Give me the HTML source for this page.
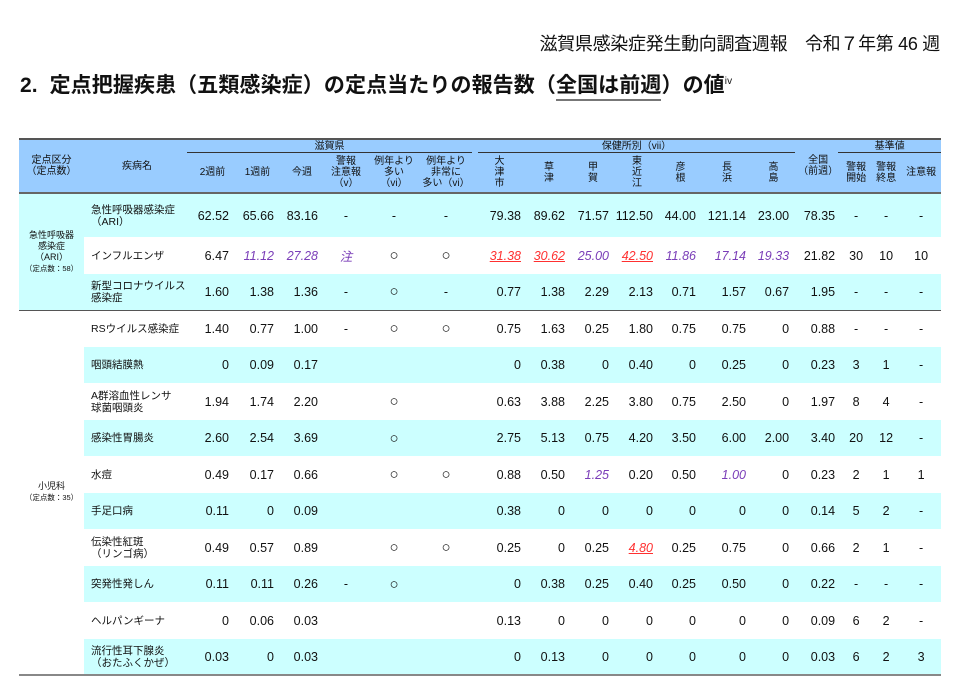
<!DOCTYPE html>
<html><head><meta charset="utf-8"><style>
body{margin:0;width:954px;height:684px;background:#fff;position:relative;overflow:hidden;font-family:"Liberation Sans","Noto Sans CJK JP",sans-serif;color:#111}
.hdr{position:absolute;right:14px;top:30px;font-size:18px;letter-spacing:-0.3px;white-space:nowrap}
.ttl{position:absolute;left:20px;top:69px;font-size:21px;font-weight:bold;letter-spacing:0.1px;white-space:nowrap}
.u{border-bottom:2px solid #777;padding-bottom:2px}
table{position:absolute;left:19px;top:138px;border-collapse:collapse;table-layout:fixed;width:922px}
td{padding:0;font-size:12.5px;white-space:nowrap}
thead td{background:#99ccff;font-size:10px;text-align:center;line-height:11px;vertical-align:middle}
tbody td{text-align:right;padding-right:6px}
tbody td.n{text-align:left;padding-left:7px;font-size:10.5px;line-height:12px}
tbody td.c{text-align:center;padding-right:0}
td.c.o{font-size:15px}
tbody td.g{background:#fff;text-align:center;padding:0;font-size:9px;line-height:11px}
tr.b td{background:#ccffff}
tr.w td{background:#fff}
.p{color:#7a3db8;font-style:italic}
.r{color:#ff3030;font-style:italic;text-decoration:underline}
</style></head><body>
<div class="hdr">滋賀県感染症発生動向調査週報　令和７年第 46 週</div>
<div class="ttl">2.&nbsp; 定点把握疾患（五類感染症）の定点当たりの報告数（<span class="u">全国は前週</span>）の値<sup style="font-size:10px;font-weight:normal">iv</sup></div>
<table>
<colgroup><col style="width:65px"><col style="width:106px"><col style="width:45px"><col style="width:45px"><col style="width:44px"><col style="width:44px"><col style="width:52px"><col style="width:52px"><col style="width:55px"><col style="width:44px"><col style="width:44px"><col style="width:44px"><col style="width:43px"><col style="width:50px"><col style="width:43px"><col style="width:46px"><col style="width:30px"><col style="width:30px"><col style="width:40px"></colgroup>
<thead>
<tr style="height:14px"><td rowspan="2" style="border-top:2px solid #555">定点区分<br>（定点数）</td><td rowspan="2" style="border-top:2px solid #555">疾病名</td><td colspan="6" style="border-top:2px solid #555"><span style="display:block;border-bottom:1px solid #333;margin:0 0 0 -3px">滋賀県</span></td><td colspan="7" style="border-top:2px solid #555"><span style="display:block;border-bottom:1px solid #333;margin:0 0 0 6px">保健所別（vii）</span></td><td rowspan="2" style="border-top:2px solid #555">全国<br>（前週）</td><td colspan="3" style="border-top:2px solid #555"><span style="display:block;border-bottom:1px solid #333;margin-left:-3px">基準値</span></td></tr>
<tr style="height:40px"><td>2週前</td><td>1週前</td><td>今週</td><td>警報<br>注意報<br>（v）</td><td>例年より<br>多い<br>（vi）</td><td>例年より<br>非常に<br>多い（vi）</td><td>大<br>津<br>市</td><td>草<br>津</td><td>甲<br>賀</td><td>東<br>近<br>江</td><td>彦<br>根</td><td>長<br>浜</td><td>高<br>島</td><td>警報<br>開始</td><td>警報<br>終息</td><td>注意報</td></tr>
</thead>
<tbody>
<tr class="b" style="height:44px"><td class="g" rowspan="3" style="border-top:2px solid #666">急性呼吸器<br>感染症<br>（ARI）<br><span style="font-size:7.5px">（定点数：58）</span></td><td class="n" style="border-top:2px solid #666">急性呼吸器感染症<br>（ARI）</td><td style="border-top:2px solid #666">62.52</td><td style="border-top:2px solid #666">65.66</td><td style="border-top:2px solid #666">83.16</td><td class="c" style="border-top:2px solid #666">-</td><td class="c" style="border-top:2px solid #666">-</td><td class="c" style="border-top:2px solid #666">-</td><td style="border-top:2px solid #666">79.38</td><td style="border-top:2px solid #666">89.62</td><td style="border-top:2px solid #666">71.57</td><td style="border-top:2px solid #666">112.50</td><td style="border-top:2px solid #666">44.00</td><td style="border-top:2px solid #666">121.14</td><td style="border-top:2px solid #666">23.00</td><td style="border-top:2px solid #666">78.35</td><td class="c" style="border-top:2px solid #666">-</td><td class="c" style="border-top:2px solid #666">-</td><td class="c" style="border-top:2px solid #666">-</td></tr>
<tr class="w" style="height:37px"><td class="n">インフルエンザ</td><td>6.47</td><td class="p">11.12</td><td class="p">27.28</td><td class="c p">注</td><td class="c o">○</td><td class="c o">○</td><td class="r">31.38</td><td class="r">30.62</td><td class="p">25.00</td><td class="r">42.50</td><td class="p">11.86</td><td class="p">17.14</td><td class="p">19.33</td><td>21.82</td><td class="c">30</td><td class="c">10</td><td class="c">10</td></tr>
<tr class="b" style="height:36px"><td class="n">新型コロナウイルス<br>感染症</td><td>1.60</td><td>1.38</td><td>1.36</td><td class="c">-</td><td class="c o">○</td><td class="c">-</td><td>0.77</td><td>1.38</td><td>2.29</td><td>2.13</td><td>0.71</td><td>1.57</td><td>0.67</td><td>1.95</td><td class="c">-</td><td class="c">-</td><td class="c">-</td></tr>
<tr class="w" style="height:37px;border-top:1.5px solid #555"><td class="g" rowspan="10">小児科<br><span style="font-size:7.5px">（定点数：35）</span></td><td class="n">RSウイルス感染症</td><td>1.40</td><td>0.77</td><td>1.00</td><td class="c">-</td><td class="c o">○</td><td class="c o">○</td><td>0.75</td><td>1.63</td><td>0.25</td><td>1.80</td><td>0.75</td><td>0.75</td><td>0</td><td>0.88</td><td class="c">-</td><td class="c">-</td><td class="c">-</td></tr>
<tr class="b" style="height:36px"><td class="n">咽頭結膜熱</td><td>0</td><td>0.09</td><td>0.17</td><td></td><td></td><td></td><td>0</td><td>0.38</td><td>0</td><td>0.40</td><td>0</td><td>0.25</td><td>0</td><td>0.23</td><td class="c">3</td><td class="c">1</td><td class="c">-</td></tr>
<tr class="w" style="height:37px"><td class="n">A群溶血性レンサ<br>球菌咽頭炎</td><td>1.94</td><td>1.74</td><td>2.20</td><td></td><td class="c o">○</td><td></td><td>0.63</td><td>3.88</td><td>2.25</td><td>3.80</td><td>0.75</td><td>2.50</td><td>0</td><td>1.97</td><td class="c">8</td><td class="c">4</td><td class="c">-</td></tr>
<tr class="b" style="height:36px"><td class="n">感染性胃腸炎</td><td>2.60</td><td>2.54</td><td>3.69</td><td></td><td class="c o">○</td><td></td><td>2.75</td><td>5.13</td><td>0.75</td><td>4.20</td><td>3.50</td><td>6.00</td><td>2.00</td><td>3.40</td><td class="c">20</td><td class="c">12</td><td class="c">-</td></tr>
<tr class="w" style="height:37px"><td class="n">水痘</td><td>0.49</td><td>0.17</td><td>0.66</td><td></td><td class="c o">○</td><td class="c o">○</td><td>0.88</td><td>0.50</td><td class="p">1.25</td><td>0.20</td><td>0.50</td><td class="p">1.00</td><td>0</td><td>0.23</td><td class="c">2</td><td class="c">1</td><td class="c">1</td></tr>
<tr class="b" style="height:36px"><td class="n">手足口病</td><td>0.11</td><td>0</td><td>0.09</td><td></td><td></td><td></td><td>0.38</td><td>0</td><td>0</td><td>0</td><td>0</td><td>0</td><td>0</td><td>0.14</td><td class="c">5</td><td class="c">2</td><td class="c">-</td></tr>
<tr class="w" style="height:37px"><td class="n">伝染性紅斑<br>（リンゴ病）</td><td>0.49</td><td>0.57</td><td>0.89</td><td></td><td class="c o">○</td><td class="c o">○</td><td>0.25</td><td>0</td><td>0.25</td><td class="r">4.80</td><td>0.25</td><td>0.75</td><td>0</td><td>0.66</td><td class="c">2</td><td class="c">1</td><td class="c">-</td></tr>
<tr class="b" style="height:36px"><td class="n">突発性発しん</td><td>0.11</td><td>0.11</td><td>0.26</td><td class="c">-</td><td class="c o">○</td><td></td><td>0</td><td>0.38</td><td>0.25</td><td>0.40</td><td>0.25</td><td>0.50</td><td>0</td><td>0.22</td><td class="c">-</td><td class="c">-</td><td class="c">-</td></tr>
<tr class="w" style="height:37px"><td class="n">ヘルパンギーナ</td><td>0</td><td>0.06</td><td>0.03</td><td></td><td></td><td></td><td>0.13</td><td>0</td><td>0</td><td>0</td><td>0</td><td>0</td><td>0</td><td>0.09</td><td class="c">6</td><td class="c">2</td><td class="c">-</td></tr>
<tr class="b" style="height:36px;border-bottom:2px solid #888"><td class="n">流行性耳下腺炎<br>（おたふくかぜ）</td><td>0.03</td><td>0</td><td>0.03</td><td></td><td></td><td></td><td>0</td><td>0.13</td><td>0</td><td>0</td><td>0</td><td>0</td><td>0</td><td>0.03</td><td class="c">6</td><td class="c">2</td><td class="c">3</td></tr>
</tbody></table>
</body></html>
